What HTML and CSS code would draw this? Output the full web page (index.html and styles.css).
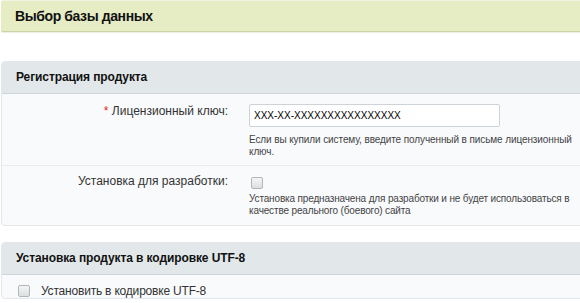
FILE: index.html
```html
<!DOCTYPE html>
<html lang="ru">
<head>
<meta charset="utf-8">
<link rel="stylesheet" href="styles.css">
</head>
<body>
<div class="page">
  <div class="title-bar">Выбор базы данных</div>

  <div class="card card-reg">
    <div class="card-head">Регистрация продукта</div>
    <div class="card-body">
      <div class="row row-key">
        <div class="label"><span class="req">*</span> Лицензионный ключ:</div>
        <div class="control">
          <div class="input">XXX-XX-XXXXXXXXXXXXXXXX</div>
          <div class="hint">Если вы купили систему, введите полученный в письме лицензионный ключ.</div>
        </div>
      </div>
      <div class="row row-dev">
        <div class="label">Установка для разработки:</div>
        <div class="control">
          <span class="checkbox"></span>
          <div class="hint">Установка предназначена для разработки и не будет использоваться в качестве реального (боевого) сайта</div>
        </div>
      </div>
    </div>
  </div>

  <div class="card card-utf">
    <div class="card-head">Установка продукта в кодировке UTF-8</div>
    <div class="card-body">
      <div class="check-row"><span class="checkbox"></span><span class="check-text">Установить в кодировке UTF-8</span></div>
    </div>
  </div>
</div>
</body>
</html>
```

FILE: styles.css
```css
html, body {
  margin: 0;
  padding: 0;
  background: #ffffff;
  overflow: hidden;
}
body {
  font-family: "Liberation Sans", Arial, sans-serif;
  color: #222;
  width: 580px;
  height: 303px;
}
.page {
  padding-left: 1px;
  width: 620px;
}
.title-bar {
  margin-top: 1px;
  height: 30px;
  background: #e6ecc4;
  border-bottom: 1px solid #cbd4a4;
  box-shadow: 0 1px 0 #eef1e2, 0 -1px 0 #f1f4e4;
  border-radius: 2px 0 0 2px;
  font-size: 14px;
  font-weight: bold;
  letter-spacing: -0.4px;
  line-height: 30px;
  padding-left: 14px;
  color: #111;
}
.card {
  border: 1px solid #e3e7e9;
  border-radius: 4px;
  background: #f9fafc;
  overflow: hidden;
}
.card-reg {
  margin-top: 29px;
}
.card-utf {
  margin-top: 16px;
}
.card-head {
  height: 31px;
  background: #e2e8ea;
  border-bottom: 1px solid #cfd6d9;
  font-size: 12px;
  font-weight: bold;
  letter-spacing: -0.1px;
  line-height: 31px;
  padding-left: 14px;
  color: #111;
}
.row {
  display: grid;
  grid-template-columns: 226px 1fr;
  column-gap: 21px;
}
.row-key {
  padding-top: 10px;
  padding-bottom: 7px;
  border-bottom: 1px solid #e8ecee;
}
.row-dev {
  padding-top: 8px;
  padding-bottom: 8px;
}
.label {
  text-align: right;
  font-size: 12px;
  color: #333;
  line-height: 14px;
}
.row-dev .label {
  line-height: 15px;
}
.req {
  color: #e0261c;
}
.control {
  width: 330px;
}
.input {
  width: 245px;
  height: 21px;
  border: 1px solid #cdd3d6;
  border-radius: 2px;
  background: #fff;
  font-size: 10px;
  line-height: 21px;
  padding-left: 4px;
  color: #000;
}
.hint {
  font-size: 10px;
  line-height: 12px;
  letter-spacing: -0.1px;
  color: #444;
}
.row-key .hint {
  margin-top: 7px;
}
.row-dev .hint {
  margin-top: 4px;
  width: 328px;
  letter-spacing: -0.15px;
}
.checkbox {
  display: block;
  width: 10px;
  height: 10px;
  border: 1px solid #b0b5b8;
  border-radius: 2px;
  background: linear-gradient(#f4f5f6, #dcdfe1);
  margin-left: 2px;
}
.row-dev .checkbox {
  margin-top: 3px;
}
.check-row {
  display: flex;
  align-items: center;
  padding-left: 16px;
  padding-top: 9px;
  height: 14px;
}
.check-row .checkbox {
  margin-left: 0;
}
.check-text {
  font-size: 12px;
  letter-spacing: -0.2px;
  color: #333;
  margin-left: 11px;
}
```
